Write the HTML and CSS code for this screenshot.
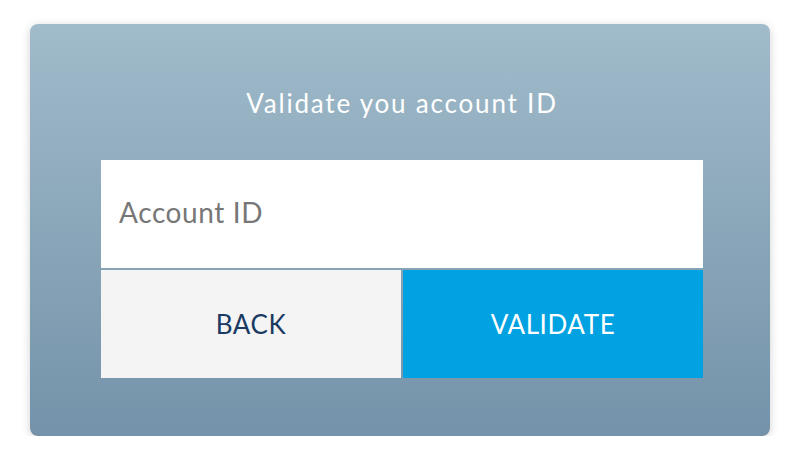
FILE: index.html
```html
<!DOCTYPE html>
<html lang="en">
<head>
  <meta charset="UTF-8">
  <meta name="viewport" content="width=device-width, initial-scale=1.0">
  <title>Validate account</title>
  <link rel="stylesheet" href="styles.css">
</head>
<body>
  <div class="card">
    <h1 class="title">Validate you account ID</h1>

    <form class="validate-form" onsubmit="return false">
      <input type="text" class="account-input" placeholder="Account ID">
      <div class="actions">
        <button type="button" class="btn btn-back">Back</button>
        <button type="submit" class="btn btn-validate">Validate</button>
      </div>
    </form>
  </div>
</body>
</html>
```

FILE: styles.css
```css
body {
  margin: 0;
  background-color: #fff;
  font-family: Lato, "Open Sans", sans-serif;
}

.card {
  box-sizing: border-box;
  width: 740px;
  height: 412px;
  margin: 24px 0 0 30px;
  padding: 64px 67px 0 71px;
  border-radius: 8px;
  background: linear-gradient(to bottom, #a0bbca, #7492a9);
  box-shadow: 0 2px 10px rgba(0, 0, 0, 0.18);
}

.title {
  margin: 0 0 42px;
  font-size: 26px;
  line-height: 30px;
  font-weight: normal;
  letter-spacing: 1.8px;
  color: #fff;
  text-align: center;
}

.validate-form {
  display: flex;
  flex-direction: column;
  gap: 2px;
}

.account-input {
  box-sizing: border-box;
  height: 108px;
  padding: 0 18px 5px;
  border: none;
  outline: none;
  background-color: #fff;
  font-family: inherit;
  font-size: 28px;
  letter-spacing: 0.6px;
  color: #333;
}

.account-input::placeholder {
  color: #777;
}

.actions {
  display: grid;
  grid-template-columns: 1fr 1fr;
  gap: 2px;
}

.btn {
  height: 108px;
  border: none;
  font-family: inherit;
  font-size: 26px;
  letter-spacing: 0.6px;
  text-transform: uppercase;
  cursor: pointer;
}

.btn-back {
  background-color: #f4f4f4;
  color: #1a3a64;
}

.btn-validate {
  background-color: #00a2e1;
  color: #fff;
}

.btn-validate:hover {
  background-color: #0090c8;
}
```
